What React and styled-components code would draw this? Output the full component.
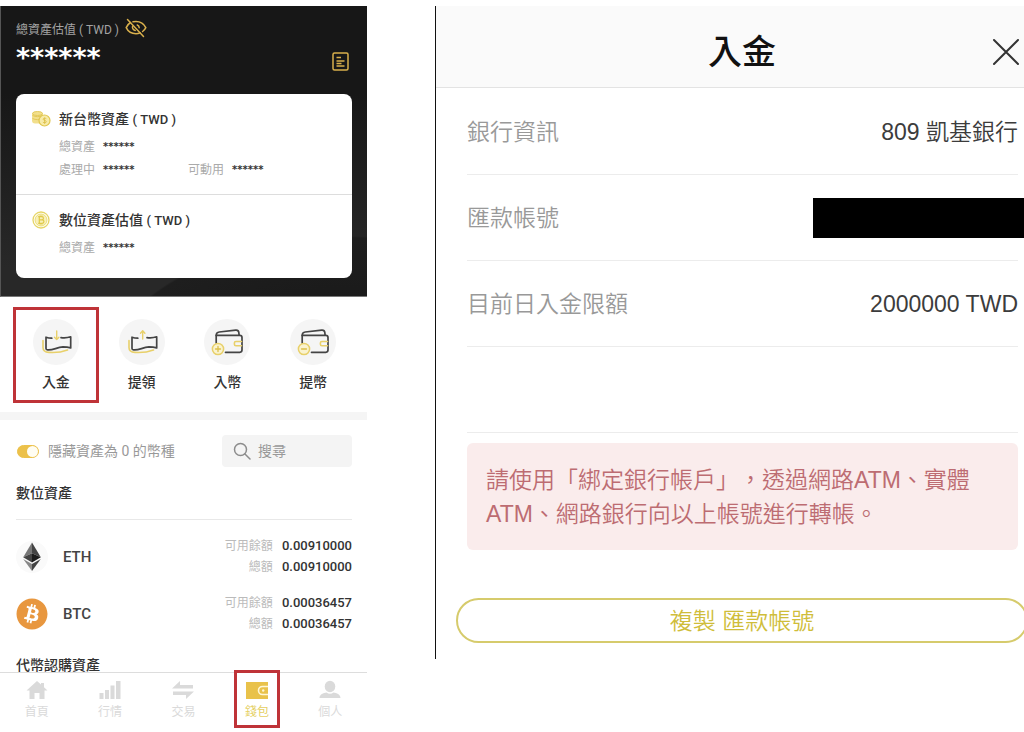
import React from "react";
import styled, { createGlobalStyle } from "styled-components";
import { FaBitcoin } from "react-icons/fa";

const GlobalStyle = createGlobalStyle`
  *, *::before, *::after { box-sizing: border-box; }
  body {
    margin: 0;
    background: #fff;
    color: #333;
    text-spacing-trim: space-all;
    font-family: Roboto, "Noto Sans CJK TC", sans-serif;
  }
  h1, h2, h3, p, dl, dd, ul { margin: 0; padding: 0; }
  ul { list-style: none; }
  button, input { font-family: inherit; }
  svg { display: block; flex-shrink: 0; }
`;

const Page = styled.main`
  display: grid;
  grid-template-columns: 367fr 589fr;
  column-gap: 68px;
  align-items: start;
  padding-top: 6px;
  overflow: hidden;
`;

/* ---------- wallet ---------- */

const Wallet = styled.section`
  min-width: 0;
`;

const Hero = styled.header`
  padding: 11px 15px 18px;
  border-left: 1px solid #555;
  border-bottom: 1px solid #777;
  background:
    radial-gradient(ellipse 260px 174px at 345px 404px, #171717 30%, #1e1e1e 99%, transparent 100%),
    linear-gradient(#171717 30%, #282828 90%);
  color: #fff;
`;

const HeroLabel = styled.div`
  display: flex;
  align-items: center;
  gap: 6px;
  height: 22px;
  font-size: 12px;
  color: #a3a3a3;
`;

const IconButton = styled.button`
  display: flex;
  padding: 0;
  border: 0;
  background: none;
  color: ${(p) => p.$color || "#d9b04c"};
  cursor: pointer;
`;

const HeroTotal = styled.div`
  display: flex;
  justify-content: space-between;
  align-items: flex-end;
  height: 32px;
  padding-right: 3px;
  margin-bottom: 23px;
`;

const Stars = styled.span`
  font-family: "DejaVu Sans", sans-serif;
  font-weight: 700;
  font-size: ${(p) => (p.$large ? "27px" : "10px")};
  line-height: ${(p) => (p.$large ? "26px" : "18px")};
  color: ${(p) => (p.$large ? "#fff" : "#333")};
`;

const Card = styled.div`
  height: 184px;
  border-radius: 8px;
  background: #fff;
`;

const CardPart = styled.section`
  padding: 15px 15px 0;
  height: ${(p) => (p.$first ? "101px" : "83px")};
  border-bottom: ${(p) => (p.$first ? "1px solid #ddd" : "0")};
`;

const CardTitle = styled.h2`
  display: flex;
  align-items: center;
  gap: 8px;
  height: 20px;
  margin-bottom: 6px;
  font-size: 14px;
  line-height: 20px;
  font-weight: 500;
  color: #333;
`;

const Currency = styled.span`
  font-size: 13px;
`;

const CardValues = styled.dl`
  display: grid;
  grid-template-columns: 129px 1fr;
  grid-auto-rows: 23px;
  align-items: center;
  padding-left: 28px;
`;

const CardValue = styled.div`
  grid-column-start: ${(p) => p.$column || 1};
  display: flex;
  align-items: center;
  gap: 8px;
  font-size: 12px;
  line-height: 20px;
  color: #aaa;
  dd { display: flex; }
`;

const Actions = styled.div`
  display: grid;
  grid-template-columns: repeat(4, 1fr);
  padding: 10px 11px 9px 13px;
  border-bottom: 8px solid #f5f5f5;
`;

const ActionButton = styled.button`
  display: flex;
  flex-direction: column;
  align-items: center;
  gap: 6px;
  height: 96px;
  padding: 9px 0 0;
  border: 3px solid ${(p) => (p.$marked ? "#bf3338" : "transparent")};
  background: none;
  color: #333;
  font-size: 14px;
  line-height: 22px;
  font-weight: 500;
  cursor: pointer;
`;

const ActionDisc = styled.span`
  width: 46px;
  height: 46px;
  border-radius: 50%;
  background: #f5f5f5;
`;

const Filters = styled.div`
  display: flex;
  justify-content: space-between;
  align-items: center;
  padding: 15px 15px 0 17px;
`;

const ToggleLabel = styled.label`
  display: flex;
  align-items: center;
  gap: 9px;
  font-size: 14px;
  line-height: 20px;
  color: #999;
`;

const Toggle = styled.input`
  appearance: none;
  display: flex;
  justify-content: flex-end;
  width: 22px;
  height: 13px;
  margin: 0;
  border: 1px solid #ecc14a;
  border-radius: 7px;
  background: #ecc14a;
  &::before {
    content: "";
    width: 11px;
    height: 11px;
    border-radius: 50%;
    background: #fffdf2;
  }
  &:not(:checked) {
    justify-content: flex-start;
    background: #ccc;
    border-color: #ccc;
  }
`;

const SearchBox = styled.label`
  display: flex;
  align-items: center;
  gap: 7px;
  width: 130px;
  height: 32px;
  padding: 0 11px;
  border-radius: 4px;
  background: #f4f4f4;
  color: #8c8c8c;
`;

const SearchInput = styled.input`
  min-width: 0;
  width: 100%;
  padding: 0;
  border: 0;
  outline: 0;
  background: none;
  font-size: 14px;
  line-height: 20px;
  &::placeholder { color: #999; opacity: 1; }
`;

const SectionTitle = styled.h3`
  height: ${(p) => (p.$clipped ? "17px" : "20px")};
  overflow: hidden;
  font-size: 14px;
  line-height: 20px;
  font-weight: 500;
  color: #333;
`;

const Assets = styled.div`
  padding: 16px 15px 0 16px;
`;

const AssetList = styled.ul`
  margin-top: 16px;
  padding: 8px 0 13px;
  border-top: 1px solid #e8e8e8;
`;

const AssetRow = styled.li`
  display: grid;
  grid-template-columns: 32px 1fr auto;
  column-gap: 15px;
  align-items: center;
  height: 57px;
`;

const AssetName = styled.span`
  font-size: 15px;
  line-height: 20px;
  font-weight: 500;
  color: #444;
`;

const AssetValues = styled.dl`
  display: grid;
  grid-template-columns: auto auto;
  column-gap: 9px;
  grid-auto-rows: 21px;
  align-items: center;
  justify-items: end;
  dt { font-size: 12px; line-height: 20px; color: #bbb; }
  dd { font-size: 13px; line-height: 20px; font-weight: 500; color: #333; }
`;

const BitcoinDisc = styled.span`
  color: #e8973f;
  svg { width: 32px; height: 32px; }
`;

const TabBar = styled.nav`
  display: grid;
  grid-template-columns: repeat(5, 1fr);
  justify-items: center;
  border-top: 1px solid #ddd;
`;

const Tab = styled.a`
  display: flex;
  flex-direction: column;
  align-items: center;
  gap: 2px;
  width: 46px;
  height: 58px;
  margin-top: -3px;
  padding-top: 7px;
  border: 3px solid ${(p) => (p.$active ? "#bf3338" : "transparent")};
  color: ${(p) => (p.$active ? "#e5cf62" : "#dadada")};
  font-size: 12px;
  line-height: 20px;
  text-decoration: none;
`;

/* ---------- deposit ---------- */

const Deposit = styled.section`
  min-width: 0;
  padding-bottom: 16px;
  border-left: 1px solid #111;
  font-family: "Liberation Sans", "Noto Sans CJK TC", sans-serif;
  font-size: 23px;
`;

const DepositHeader = styled.header`
  display: grid;
  grid-template-columns: 1fr auto 1fr;
  align-items: center;
  height: 82px;
  padding: 11px 4px 0 28px;
  border-bottom: 1px solid #e3e3e3;
  background: #fafafa;
  button { justify-self: end; }
`;

const DepositTitle = styled.h1`
  grid-column: 2;
  font-size: 34px;
  line-height: 44px;
  font-weight: 500;
  color: #111;
`;

const Details = styled.dl`
  padding: 1px 6px 0 31px;
`;

const DetailRow = styled.div`
  display: flex;
  justify-content: space-between;
  align-items: center;
  height: 86px;
  border-bottom: 1px solid #ececec;
  line-height: 34px;
  font-weight: 350;
  dt { color: #999; }
  dd { color: #3c3c3c; }
`;

const Redacted = styled.span`
  display: block;
  width: 211px;
  height: 40px;
  margin-right: -6px;
  background: #000;
`;

const Notice = styled.p`
  margin: 10px 6px 0 31px;
  padding: 20px 19px 19px;
  border-radius: 6px;
  background: #faecec;
  color: #bd6c72;
  line-height: 34px;
  font-weight: 350;
`;

const CopyButton = styled.button`
  display: block;
  width: calc(100% - 16px);
  height: 45px;
  margin: 48px -4px 0 20px;
  padding: 0;
  border: 2px solid #d6cb6c;
  border-radius: 23px;
  background: #fff;
  color: #cfbd3a;
  font-size: 23px;
  line-height: 34px;
  font-weight: 350;
  cursor: pointer;
`;

/* ---------- icons ---------- */

const EyeOff = () => (
  <svg width="22" height="20" viewBox="0 0 22 20" fill="none" stroke="currentColor" strokeWidth="1.500" strokeLinecap="round">
    <path d="M5.500 4.500C3.500 5.800 2 7.700 1.200 9.600c1.700 3.600 5.300 6.100 9.800 6.100 1.500 0 2.900-.3 4.100-.8" />
    <path d="M8 3.800c1-.3 2-.4 3-.4 4.500 0 8.100 2.600 9.800 6.200-.7 1.500-1.800 2.900-3.200 3.900" />
    <path d="M7.600 8.200c-.6 2 .6 3.800 2.600 4.200M12.200 7c1.200.4 2 1.400 2 2.700" />
    <path d="M2.500 1.500l16 17" />
  </svg>
);

const DocIcon = () => (
  <svg width="17" height="19" viewBox="0 0 17 19" fill="none" stroke="currentColor" strokeWidth="1.500">
    <rect x="1" y="1" width="15" height="17" rx="1.500" />
    <path d="M4.500 5.500h4.500M4.500 9h8M4.500 11.500h5M4.500 14h8" strokeWidth="1.400" />
  </svg>
);

const CoinsIcon = () => (
  <svg width="20" height="18" viewBox="0 0 20 18">
    <rect x="1" y="2" width="11" height="11.500" rx="3" fill="#f2df8c" />
    <path d="M1.500 5.500c3 1.500 7 1.500 10 0M1.500 8.500c3 1.500 7 1.500 10 0" stroke="#e3c95a" fill="none" />
    <ellipse cx="6.500" cy="3.500" rx="5" ry="2" fill="#f2df8c" stroke="#e3c95a" />
    <circle cx="13.500" cy="10.500" r="5.500" fill="#f7eba9" stroke="#e0c64f" strokeWidth="1.200" />
    <path d="M15.300 8.700c-1.200-.9-3.200-.7-3.200.5 0 1.500 3.200.9 3.200 2.500 0 1.200-2.200 1.500-3.400.5M13.600 7.500v6.300" stroke="#dcc04a" strokeWidth=".9" fill="none" />
  </svg>
);

const CoinIcon = () => (
  <svg width="20" height="18" viewBox="0 0 20 18" fill="none" stroke="#e6d565">
    <circle cx="10" cy="9" r="8" strokeWidth="1.300" />
    <circle cx="10" cy="9" r="6" fill="#f8f0b8" strokeWidth=".8" />
    <path d="M8.300 5.700v6.600M7.200 5.700h3.600c2.200 0 2.200 3.100 0 3.100H8.300h2.900c2.300 0 2.300 3.500 0 3.500h-4M9.200 4.500v1.200M10.900 4.500v1.200M9.200 12.300v1.200M10.900 12.300v1.200" strokeWidth="1.200" stroke="#dfc94a" />
  </svg>
);

const CashIcon = ({ up }) => (
  <svg width="46" height="46" viewBox="0 0 46 46" fill="none" strokeLinecap="round" strokeLinejoin="round">
    <path d="M10 21.500v7.300c0 2.800 1.800 4.300 6 4.600 6.500.5 12.500-.2 18.500-2.400" stroke="#e8d06a" strokeWidth="1.600" />
    <path d="M18.800 19.200c-2 0-4-.3-5.800-1v11.300c0 .9.500 1.300 1.600 1.400 5.500.6 9-2.700 15.400-3 3 0 5.300.3 7.700 1V17.800c-2.800.9-6.500 1.200-9.700.8" stroke="#444" strokeWidth="1.700" />
    <path d={up ? "M23.700 20v-8M21.500 14.200l2.200-2.400 2.200 2.400" : "M23.700 12v8.500M21.500 18.200l2.200 2.400 2.200-2.400"} stroke="#e8d06a" strokeWidth="1.400" />
  </svg>
);

const WalletIcon = ({ minus }) => (
  <svg width="46" height="46" viewBox="0 0 46 46" fill="none" strokeLinecap="round" strokeLinejoin="round">
    <path d="M12.200 24v-7.700h23.600c1.400 0 2.200.8 2.200 2.200v12.600c0 1.400-.8 2.200-2.200 2.200H21.500" stroke="#444" strokeWidth="1.700" />
    <path d="M12.200 16.500c0-2.200 1-3.300 3-3.500l16.500-1.900c2-.2 2.900.6 3.100 2.300l.3 2.800" stroke="#444" strokeWidth="1.700" />
    <path d="M37.500 22.500h-5.600a1.500 1.500 0 0 0-1.500 1.500v1.300a1.500 1.500 0 0 0 1.500 1.500h5.600" stroke="#e8d06a" strokeWidth="1.600" />
    <circle cx="14" cy="30" r="5.600" fill="#faf3cf" stroke="#e8d06a" strokeWidth="1.500" />
    <path d={minus ? "M11.500 30h5" : "M11.500 30h5M14 27.500v5"} stroke="#dcc04a" strokeWidth="1.300" />
  </svg>
);

const SearchIcon = () => (
  <svg width="18" height="18" viewBox="0 0 18 18" fill="none" stroke="currentColor" strokeWidth="1.500" strokeLinecap="round">
    <circle cx="7.500" cy="7.500" r="6" />
    <path d="M12 12l5 5" />
  </svg>
);

const EthIcon = () => (
  <svg width="32" height="32" viewBox="0 0 32 32">
    <circle cx="16" cy="16" r="16" fill="#fafafa" />
    <path d="M16 1.500L7.200 16.300 16 12.300z" fill="#777" />
    <path d="M16 1.500l8.800 14.800L16 12.300z" fill="#444" />
    <path d="M7.200 16.300L16 12.300v9.300z" fill="#444" />
    <path d="M24.800 16.300L16 12.300v9.300z" fill="#1c1c1c" />
    <path d="M7.200 18L16 30v-7z" fill="#888" />
    <path d="M24.800 18L16 30v-7z" fill="#444" />
  </svg>
);

const tabIcon = (shape) => (
  <svg width="22" height="20" viewBox="0 0 22 20" fill="currentColor">{shape}</svg>
);

const HomeShape = tabIcon(<path d="M11 1L0.500 10.500h3V19h5v-6h5v6h5v-8.500h3l-3.500-3.200V3h-3v1.600z" />);
const ChartShape = tabIcon(<path d="M0.500 13h4v6h-4zM6 10h4v9H6zM11.500 5.500h4V19h-4zM17 1h4.500v18H17z" />);
const TradeShape = tabIcon(<path d="M0 8.500L8 1v4h13v3.500zM22 11.500L14 19v-4H1v-3.500z" />);
const WalletShape = tabIcon(
  <>
    <path d="M0 2h22v17H0z" fill="#e9c24a" />
    <path d="M22 6.500h-5.500a4 4 0 0 0 0 8H22" fill="#e9c24a" stroke="#fff7d6" strokeWidth="1.600" />
    <circle cx="17.200" cy="10.500" r="1.200" fill="#fff7d6" />
  </>
);
const PersonShape = tabIcon(
  <>
    <ellipse cx="11" cy="6.500" rx="5.300" ry="5.700" />
    <path d="M0.500 18c0-3.500 4-5.200 7-5.500 2 1.700 5 1.700 7 0 3 .3 7 2 7 5.500z" />
  </>
);

const CloseIcon = () => (
  <svg width="28" height="28" viewBox="0 0 28 28" fill="none" stroke="currentColor" strokeWidth="2" strokeLinecap="round">
    <path d="M2 2l24 24M26 2L2 26" />
  </svg>
);

/* ---------- data ---------- */

const actions = [
  { label: "入金", icon: <CashIcon />, marked: true },
  { label: "提領", icon: <CashIcon up /> },
  { label: "入幣", icon: <WalletIcon /> },
  { label: "提幣", icon: <WalletIcon minus /> },
];

const assets = [
  { name: "ETH", icon: <EthIcon />, amount: "0.00910000" },
  { name: "BTC", icon: <BitcoinDisc><FaBitcoin /></BitcoinDisc>, amount: "0.00036457" },
];

const tabs = [
  { label: "首頁", icon: HomeShape },
  { label: "行情", icon: ChartShape },
  { label: "交易", icon: TradeShape },
  { label: "錢包", icon: WalletShape, active: true },
  { label: "個人", icon: PersonShape },
];

const Masked = ({ label, column }) => (
  <CardValue $column={column}>
    <dt>{label}</dt>
    <dd><Stars>******</Stars></dd>
  </CardValue>
);

export default function App() {
  return (
    <Page lang="zh-TW">
      <GlobalStyle />
      <Wallet>
        <Hero>
          <HeroLabel>
            總資產估值 ( TWD )
            <IconButton type="button" aria-label="顯示資產"><EyeOff /></IconButton>
          </HeroLabel>
          <HeroTotal>
            <Stars $large>******</Stars>
            <IconButton type="button" aria-label="紀錄"><DocIcon /></IconButton>
          </HeroTotal>
          <Card>
            <CardPart $first>
              <CardTitle>
                <CoinsIcon />
                <span>新台幣資產 <Currency>( TWD )</Currency></span>
              </CardTitle>
              <CardValues>
                <Masked label="總資產" />
                <Masked label="處理中" />
                <Masked label="可動用" column={2} />
              </CardValues>
            </CardPart>
            <CardPart>
              <CardTitle>
                <CoinIcon />
                <span>數位資產估值 <Currency>( TWD )</Currency></span>
              </CardTitle>
              <CardValues>
                <Masked label="總資產" />
              </CardValues>
            </CardPart>
          </Card>
        </Hero>

        <Actions>
          {actions.map((a) => (
            <ActionButton type="button" key={a.label} $marked={a.marked}>
              <ActionDisc>{a.icon}</ActionDisc>
              {a.label}
            </ActionButton>
          ))}
        </Actions>

        <Filters>
          <ToggleLabel>
            <Toggle type="checkbox" defaultChecked />
            隱藏資產為 0 的幣種
          </ToggleLabel>
          <SearchBox>
            <SearchIcon />
            <SearchInput type="text" placeholder="搜尋" aria-label="搜尋" />
          </SearchBox>
        </Filters>

        <Assets>
          <SectionTitle>數位資產</SectionTitle>
          <AssetList>
            {assets.map((a) => (
              <AssetRow key={a.name}>
                {a.icon}
                <AssetName>{a.name}</AssetName>
                <AssetValues>
                  <dt>可用餘額</dt>
                  <dd>{a.amount}</dd>
                  <dt>總額</dt>
                  <dd>{a.amount}</dd>
                </AssetValues>
              </AssetRow>
            ))}
          </AssetList>
          <SectionTitle $clipped>代幣認購資產</SectionTitle>
        </Assets>

        <TabBar>
          {tabs.map((t) => (
            <Tab href="#" key={t.label} $active={t.active}>
              {t.icon}
              {t.label}
            </Tab>
          ))}
        </TabBar>
      </Wallet>

      <Deposit>
        <DepositHeader>
          <DepositTitle>入金</DepositTitle>
          <IconButton type="button" aria-label="關閉" $color="#333"><CloseIcon /></IconButton>
        </DepositHeader>
        <Details>
          <DetailRow>
            <dt>銀行資訊</dt>
            <dd>809 凱基銀行</dd>
          </DetailRow>
          <DetailRow>
            <dt>匯款帳號</dt>
            <dd><Redacted /></dd>
          </DetailRow>
          <DetailRow>
            <dt>目前日入金限額</dt>
            <dd>2000000 TWD</dd>
          </DetailRow>
          <DetailRow />
        </Details>
        <Notice>
          請使用「綁定銀行帳戶」，透過網路ATM、實體ATM、網路銀行向以上帳號進行轉帳。
        </Notice>
        <CopyButton type="button">複製 匯款帳號</CopyButton>
      </Deposit>
    </Page>
  );
}
